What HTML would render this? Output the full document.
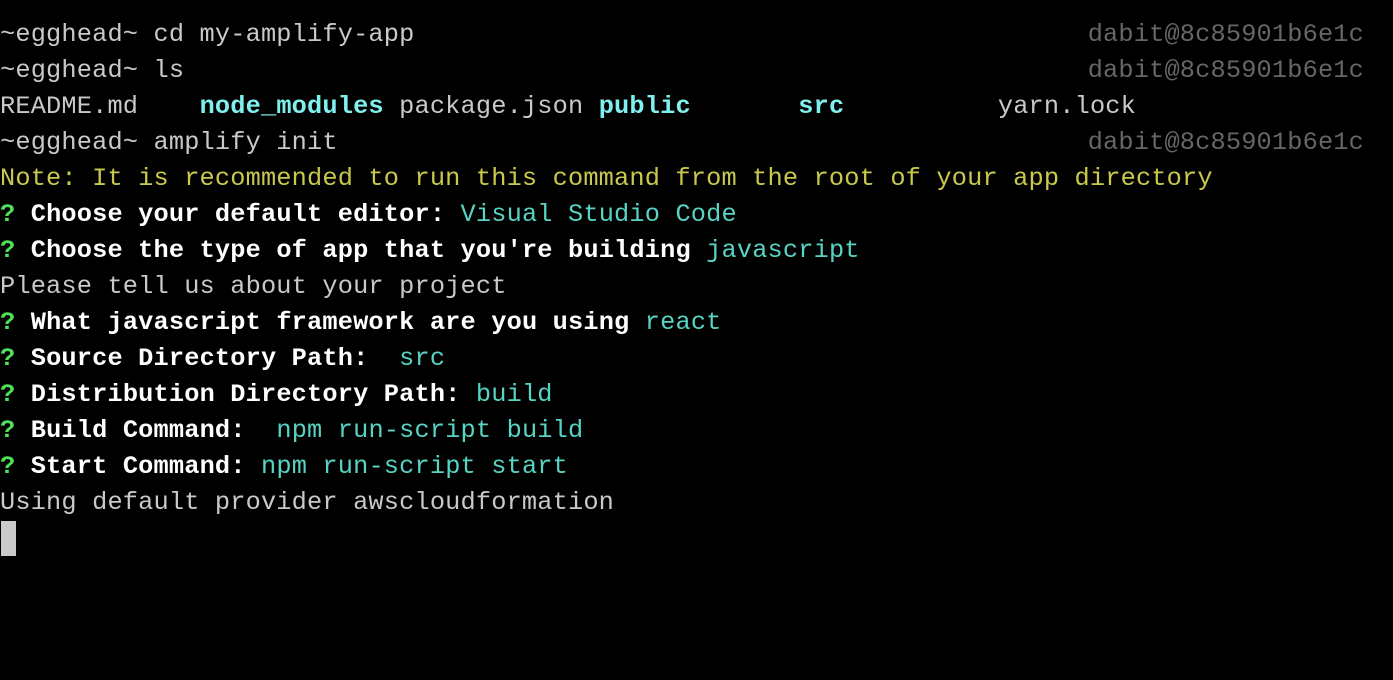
<!DOCTYPE html>
<html><head><style>
html,body{margin:0;padding:0;background:#000;width:1393px;height:680px;overflow:hidden}
.l{position:absolute;left:0;height:36px;line-height:36px;font-family:"Liberation Mono",monospace;font-size:25.3px;letter-spacing:0.17px;white-space:pre;color:#c9c9c9}
.r{position:absolute;right:29px;height:36px;line-height:36px;font-family:"Liberation Mono",monospace;font-size:25.3px;letter-spacing:0.17px;white-space:pre;color:#666}
.c{color:#7ff0ee;font-weight:bold}
.y{color:#c9c94e}
.g{color:#4fe05a;font-weight:bold}
.w{color:#fff;font-weight:bold}
.t{color:#57d4c4}
.cur{position:absolute;left:1px;top:521px;width:15px;height:35px;background:#c9c9c9}
</style></head><body>
<div class="l" style="top:17px">~egghead~ cd my-amplify-app</div><div class="r" style="top:17px">dabit@8c85901b6e1c</div>
<div class="l" style="top:53px">~egghead~ ls</div><div class="r" style="top:53px">dabit@8c85901b6e1c</div>
<div class="l" style="top:89px">README.md    <span class="c">node_modules</span> package.json <span class="c">public</span>       <span class="c">src</span>          yarn.lock</div>
<div class="l" style="top:125px">~egghead~ amplify init</div><div class="r" style="top:125px">dabit@8c85901b6e1c</div>
<div class="l y" style="top:161px">Note: It is recommended to run this command from the root of your app directory</div>
<div class="l" style="top:197px"><span class="g">?</span> <span class="w">Choose your default editor:</span> <span class="t">Visual Studio Code</span></div>
<div class="l" style="top:233px"><span class="g">?</span> <span class="w">Choose the type of app that you're building</span> <span class="t">javascript</span></div>
<div class="l" style="top:269px">Please tell us about your project</div>
<div class="l" style="top:305px"><span class="g">?</span> <span class="w">What javascript framework are you using</span> <span class="t">react</span></div>
<div class="l" style="top:341px"><span class="g">?</span> <span class="w">Source Directory Path: </span> <span class="t">src</span></div>
<div class="l" style="top:377px"><span class="g">?</span> <span class="w">Distribution Directory Path:</span> <span class="t">build</span></div>
<div class="l" style="top:413px"><span class="g">?</span> <span class="w">Build Command: </span> <span class="t">npm run-script build</span></div>
<div class="l" style="top:449px"><span class="g">?</span> <span class="w">Start Command:</span> <span class="t">npm run-script start</span></div>
<div class="l" style="top:485px">Using default provider awscloudformation</div>
<div class="cur"></div>
</body></html>
